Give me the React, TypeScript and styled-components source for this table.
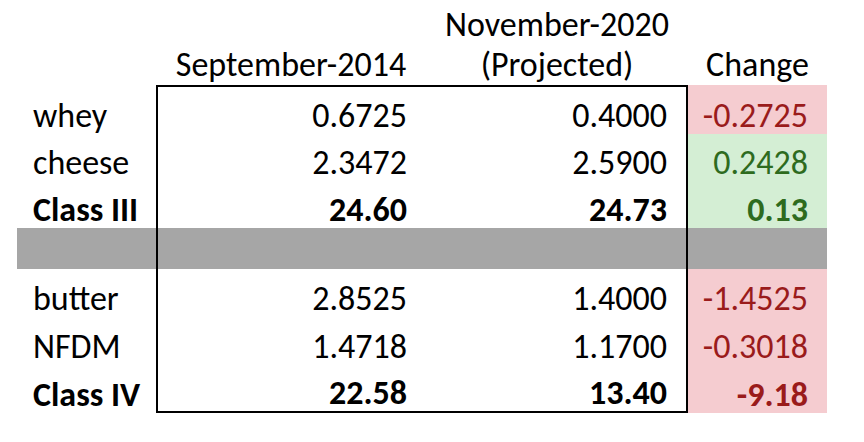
import styled, { createGlobalStyle } from "styled-components";

const GlobalStyle = createGlobalStyle`
  html, body {
    margin: 0;
    padding: 0;
    background: #fff;
  }
  body {
    font-family: Carlito, Calibri, Lato, "Open Sans", sans-serif;
    color: #000;
  }
`;

const Page = styled.div`
  width: 864px;
  height: 442px;
  padding-left: 17px;
  box-sizing: border-box;
  overflow: hidden;
`;

const Sheet = styled.div`
  display: grid;
  grid-template-columns: 139px 270px 262px 139px;
  grid-template-rows: 85px 49px 47px 47px 41px 48px 48px 48px;
  font-size: 34px;
`;

type Tone = "none" | "bad" | "good" | "gap";

const tones: Record<Tone, { bg: string; fg: string }> = {
  none: { bg: "transparent", fg: "#000" },
  bad: { bg: "#f5ccd0", fg: "#9a1b1b" },
  good: { bg: "#d4eed4", fg: "#2e6b1e" },
  gap: { bg: "#a6a6a6", fg: "#000" },
};

const Head = styled.div`
  display: flex;
  align-items: flex-end;
  justify-content: center;
  text-align: center;
  line-height: 40px;
  padding-bottom: 0;
  box-sizing: border-box;
  white-space: nowrap;
`;

const Cell = styled.div<{
  $tone?: Tone;
  $bold?: boolean;
  $align?: "left" | "right";
  $left?: boolean;
  $right?: boolean;
  $top?: boolean;
  $bottom?: boolean;
}>`
  display: flex;
  align-items: flex-end;
  justify-content: ${(p) => (p.$align === "left" ? "flex-start" : "flex-end")};
  padding: 0 19px 0 ${(p) => (p.$align === "left" ? "16px" : "0")};
  box-sizing: border-box;
  line-height: 1.1;
  white-space: nowrap;
  font-weight: ${(p) => (p.$bold ? 700 : 400)};
  background: ${(p) => tones[p.$tone ?? "none"].bg};
  color: ${(p) => tones[p.$tone ?? "none"].fg};
  border-left: ${(p) => (p.$left ? "2px solid #000" : "none")};
  border-right: ${(p) => (p.$right ? "2px solid #000" : "none")};
  border-top: ${(p) => (p.$top ? "2px solid #000" : "none")};
  border-bottom: ${(p) => (p.$bottom ? "2px solid #000" : "none")};
`;

type Row = {
  label: string;
  sep: string;
  nov: string;
  change: string;
  bold?: boolean;
  gap?: boolean;
};

const rows: Row[] = [
  { label: "whey", sep: "0.6725", nov: "0.4000", change: "-0.2725" },
  { label: "cheese", sep: "2.3472", nov: "2.5900", change: "0.2428" },
  { label: "Class III", sep: "24.60", nov: "24.73", change: "0.13", bold: true },
  { label: "", sep: "", nov: "", change: "", gap: true },
  { label: "butter", sep: "2.8525", nov: "1.4000", change: "-1.4525" },
  { label: "NFDM", sep: "1.4718", nov: "1.1700", change: "-0.3018" },
  { label: "Class IV", sep: "22.58", nov: "13.40", change: "-9.18", bold: true },
];

export default function App() {
  return (
    <Page>
      <GlobalStyle />
      <Sheet>
        <Head />
        <Head>September-2014</Head>
        <Head>
          November-2020
          <br />
          (Projected)
        </Head>
        <Head>Change</Head>
        {rows.map((r, i) => {
          const first = i === 0;
          const last = i === rows.length - 1;
          const gapTone: Tone | undefined = r.gap ? "gap" : undefined;
          const changeTone: Tone = r.gap
            ? "gap"
            : r.change.startsWith("-")
            ? "bad"
            : "good";
          return [
            <Cell key={`${i}a`} $align="left" $bold={r.bold} $tone={gapTone}>
              {r.label}
            </Cell>,
            <Cell
              key={`${i}b`}
              $bold={r.bold}
              $tone={gapTone}
              $left
              $top={first}
              $bottom={last}
            >
              {r.sep}
            </Cell>,
            <Cell
              key={`${i}c`}
              $bold={r.bold}
              $tone={gapTone}
              $right
              $top={first}
              $bottom={last}
            >
              {r.nov}
            </Cell>,
            <Cell key={`${i}d`} $bold={r.bold} $tone={changeTone}>
              {r.change}
            </Cell>,
          ];
        })}
      </Sheet>
    </Page>
  );
}
